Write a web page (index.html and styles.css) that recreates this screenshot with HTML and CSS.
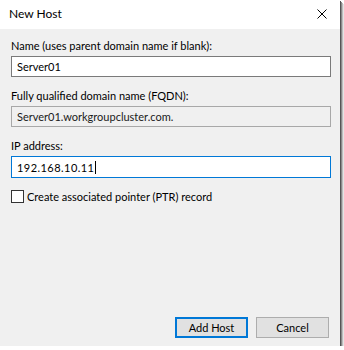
FILE: index.html
```html
<!DOCTYPE html>
<html lang="en">
<head>
<meta charset="UTF-8">
<title>New Host</title>
<link rel="stylesheet" href="styles.css">
</head>
<body>
    <div class="dialog">
        <!-- Title bar -->
        <div class="titlebar">
            <span class="title">New Host</span>
            <svg class="close" width="10" height="10" viewBox="0 0 10 10">
                <path d="M0.5 0.5 L9.5 9.5 M9.5 0.5 L0.5 9.5" stroke="#000" stroke-width="1" fill="none"/>
            </svg>
        </div>

        <div class="content">
            <div class="field">
                <label>Name (uses parent domain name if blank):</label>
                <div class="edit">Server01</div>
            </div>
            <div class="field">
                <label>Fully qualified domain name (FQDN):</label>
                <div class="edit readonly">Server01.workgroupcluster.com.</div>
            </div>
            <div class="field">
                <label>IP address:</label>
                <div class="edit focused"><span class="ip">192.168.10.11</span><span class="caret"></span></div>
            </div>
            <div class="check">
                <span class="box"></span>
                <span>Create associated pointer (PTR) record</span>
            </div>
        </div>

        <div class="buttons">
            <div class="btn default">Add Host</div>
            <div class="btn">Cancel</div>
        </div>
    </div>
</body>
</html>
```

FILE: styles.css
```css
body {
    margin: 0;
    padding: 0;
    background: white;
    font-family: Lato, "Liberation Sans", Arial, sans-serif;
    font-size: 11px;
    color: #000;
}

.dialog {
    width: 340px;
    height: 346px;
    background: #f0f0f0;
    display: flex;
    flex-direction: column;
    box-shadow: 1px 1px 0 #555, 2px 2px 0 #8a8a8a, 3px 3px 0 #bdbdbd, 4px 4px 0 #e4e4e4;
}

.titlebar {
    height: 29px;
    background: white;
    display: flex;
    align-items: center;
    justify-content: space-between;
    padding: 0 13px 2px 9px;
    box-sizing: border-box;
    font-size: 12px;
}

.content {
    flex: 1;
    padding: 9px 9px 0 11px;
    display: flex;
    flex-direction: column;
    gap: 11px;
}

.field label {
    display: block;
    line-height: 15px;
    margin-bottom: 3px;
}

.edit {
    height: 21px;
    box-sizing: border-box;
    border: 1px solid #7a7a7a;
    background: white;
    padding: 0 5px;
    line-height: 19px;
    display: flex;
    align-items: center;
}

.edit.readonly {
    background: #f0f0f0;
    border-color: #a8a8a8;
    color: #1a1a1a;
}

.edit.focused {
    border-color: #0078d7;
    height: 22px;
}

.ip {
    letter-spacing: 0.45px;
}

.caret {
    display: inline-block;
    width: 1px;
    height: 13px;
    background: #000;
    margin-left: 1px;
}

.check {
    display: flex;
    align-items: center;
    gap: 3px;
    line-height: 15px;
}

.box {
    width: 13px;
    height: 13px;
    box-sizing: border-box;
    border: 1px solid #333;
    background: white;
}

.buttons {
    display: flex;
    justify-content: flex-end;
    gap: 8px;
    padding: 0 11px 8px 0;
}

.btn {
    width: 73px;
    height: 21px;
    box-sizing: border-box;
    border: 1px solid #adadad;
    background: #e1e1e1;
    display: flex;
    align-items: center;
    justify-content: center;
}

.btn.default {
    border: 2px solid #0078d7;
}
```
